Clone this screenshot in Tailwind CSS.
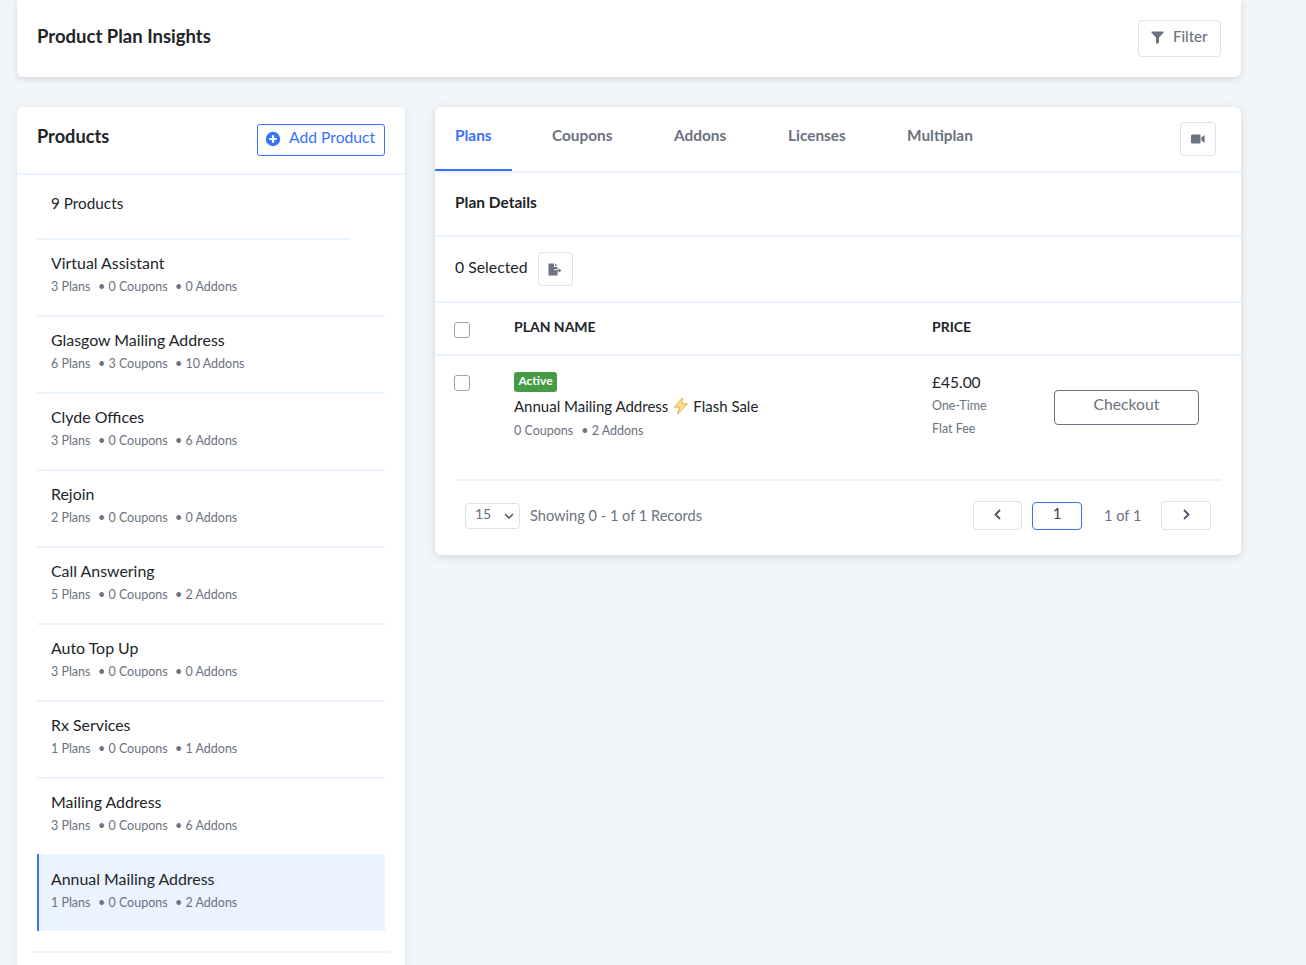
<!DOCTYPE html>
<html lang="en">
<head>
  <meta charset="UTF-8">
  <title>Product Plan Insights</title>
  <script src="https://cdn.jsdelivr.net/npm/@tailwindcss/browser@4"></script>
</head>
<body class="bg-[#f2f6f9] text-[#212529] font-['Lato',sans-serif] h-[965px] overflow-hidden">
  <div class="w-[1224px] ml-[17px]">

    <!-- Page header -->
    <div class="h-[77px] bg-white rounded-b-md shadow-[0_2px_6px_rgba(50,60,80,0.16)] flex justify-between pl-5 pr-5">
      <h1 class="text-[18.5px] font-bold leading-[24px] mt-[24px]">Product Plan Insights</h1>
      <button class="w-[83px] h-[37px] mt-5 border border-[#dfe1e8] rounded text-[#6b7280] text-[15px] font-medium flex items-center pl-3 gap-[9px]">
        <svg class="w-[13px] h-[13px] -mt-[2px]" viewBox="0 0 13 13"><path fill="#6b7280" d="M0.5 0.5h12v1.2L8 6.6V12L5 12.8V6.6L0.5 1.7z"/></svg>
        <span class="-mt-[4px]">Filter</span>
      </button>
    </div>

    <div class="grid grid-cols-[388px_806px] gap-[30px] mt-[30px]">

      <!-- Products list -->
      <div class="bg-white rounded-t-md shadow-[0_2px_8px_rgba(50,60,80,0.1)] h-[900px]">
        <div class="h-[68px] border-b-2 border-[#ebf4fd] flex justify-between pl-5 pr-5">
          <h2 class="text-[18.2px] font-bold leading-[24px] mt-[17px]">Products</h2>
          <button class="w-[128px] h-[32px] mt-[17px] border border-[#3772ff] rounded-[3px] text-[#3772ff] text-[15.7px] flex items-center pl-[7px] gap-[8px]">
            <svg class="w-[16px] h-[16px] -mt-[2px]" viewBox="0 0 16 16"><circle cx="8" cy="8" r="7.2" fill="#3772ff"/><path d="M8 4.2v7.6M4.2 8h7.6" stroke="#fff" stroke-width="2.2"/></svg>
            <span class="-mt-[4px]">Add Product</span>
          </button>
        </div>
        <div class="mx-5">
          <div class="h-[65px] w-[313px] border-b-2 border-[#ebf4fd] pl-[14px] pt-[18px] text-[15.3px] leading-5">9 Products</div>

          <div class="h-[77px] border-b-2 border-[#ebf4fd] pl-[14px] pt-[13px]">
            <div class="text-[15.9px] leading-5">Virtual Assistant</div>
            <div class="text-[12.5px] leading-5 mt-[4px] text-[#6b7280] flex"><span class="w-[47px]">3 Plans</span><span class="w-[77px]">• 0 Coupons</span><span>• 0 Addons</span></div>
          </div>
          <div class="h-[77px] border-b-2 border-[#ebf4fd] pl-[14px] pt-[13px]">
            <div class="text-[15.9px] leading-5">Glasgow Mailing Address</div>
            <div class="text-[12.5px] leading-5 mt-[4px] text-[#6b7280] flex"><span class="w-[47px]">6 Plans</span><span class="w-[77px]">• 3 Coupons</span><span>• 10 Addons</span></div>
          </div>
          <div class="h-[77px] border-b-2 border-[#ebf4fd] pl-[14px] pt-[13px]">
            <div class="text-[15.9px] leading-5">Clyde Offices</div>
            <div class="text-[12.5px] leading-5 mt-[4px] text-[#6b7280] flex"><span class="w-[47px]">3 Plans</span><span class="w-[77px]">• 0 Coupons</span><span>• 6 Addons</span></div>
          </div>
          <div class="h-[77px] border-b-2 border-[#ebf4fd] pl-[14px] pt-[13px]">
            <div class="text-[15.9px] leading-5">Rejoin</div>
            <div class="text-[12.5px] leading-5 mt-[4px] text-[#6b7280] flex"><span class="w-[47px]">2 Plans</span><span class="w-[77px]">• 0 Coupons</span><span>• 0 Addons</span></div>
          </div>
          <div class="h-[77px] border-b-2 border-[#ebf4fd] pl-[14px] pt-[13px]">
            <div class="text-[15.9px] leading-5">Call Answering</div>
            <div class="text-[12.5px] leading-5 mt-[4px] text-[#6b7280] flex"><span class="w-[47px]">5 Plans</span><span class="w-[77px]">• 0 Coupons</span><span>• 2 Addons</span></div>
          </div>
          <div class="h-[77px] border-b-2 border-[#ebf4fd] pl-[14px] pt-[13px]">
            <div class="text-[15.9px] leading-5">Auto Top Up</div>
            <div class="text-[12.5px] leading-5 mt-[4px] text-[#6b7280] flex"><span class="w-[47px]">3 Plans</span><span class="w-[77px]">• 0 Coupons</span><span>• 0 Addons</span></div>
          </div>
          <div class="h-[77px] border-b-2 border-[#ebf4fd] pl-[14px] pt-[13px]">
            <div class="text-[15.9px] leading-5">Rx Services</div>
            <div class="text-[12.5px] leading-5 mt-[4px] text-[#6b7280] flex"><span class="w-[47px]">1 Plans</span><span class="w-[77px]">• 0 Coupons</span><span>• 1 Addons</span></div>
          </div>
          <div class="h-[75px] pl-[14px] pt-[13px]">
            <div class="text-[15.9px] leading-5">Mailing Address</div>
            <div class="text-[12.5px] leading-5 mt-[4px] text-[#6b7280] flex"><span class="w-[47px]">3 Plans</span><span class="w-[77px]">• 0 Coupons</span><span>• 6 Addons</span></div>
          </div>
          <div class="h-[77px] bg-[#ebf3fe] border-l-2 border-[#3772ff] pl-[12px] pt-[15px]">
            <div class="text-[15.9px] leading-5">Annual Mailing Address</div>
            <div class="text-[12.5px] leading-5 mt-[4px] text-[#6b7280] flex"><span class="w-[47px]">1 Plans</span><span class="w-[77px]">• 0 Coupons</span><span>• 2 Addons</span></div>
          </div>
        </div>
        <div class="h-[2px] bg-[#ebf4fd] mx-[15px] mt-5"></div>
      </div>

      <!-- Plans panel -->
      <div class="bg-white rounded-md shadow-[0_2px_8px_rgba(50,60,80,0.16)] h-[448px]">
        <div class="h-[66px] border-b-2 border-[#ebf4fd] flex justify-between pr-[25px]">
          <div class="flex text-[15.4px] font-bold text-[#6b7280] leading-5">
            <div class="w-[77px] h-[64px] pl-5 pt-[18px] text-[#3772ff] border-b-2 border-[#3772ff]">Plans</div>
            <div class="ml-5 w-[102px] pl-5 pt-[18px]">Coupons</div>
            <div class="ml-5 w-[94px] pl-5 pt-[18px]">Addons</div>
            <div class="ml-5 w-[99px] pl-5 pt-[18px]">Licenses</div>
            <div class="ml-5 pl-5 pt-[18px]">Multiplan</div>
          </div>
          <button class="w-[36px] h-[34px] mt-[15px] border border-[#dfe1e8] rounded flex items-center justify-center">
            <svg class="w-[14px] h-[10px]" viewBox="0 0 14 10"><rect x="0" y="0.5" width="9.5" height="9" rx="1.2" fill="#6b7280"/><path fill="#6b7280" d="M10.3 3.6 13.6 1v8l-3.3-2.6z"/></svg>
          </button>
        </div>
        <div class="h-[64px] border-b-2 border-[#ebf4fd] pl-5 pt-[19px] text-[15.5px] font-bold leading-5">Plan Details</div>
        <div class="h-[66px] border-b-2 border-[#ebf4fd] pl-5 flex items-center gap-[10px]">
          <span class="text-[15.8px] -mt-[4px]">0 Selected</span>
          <button class="w-[35px] h-[34px] border border-[#dfe1e8] rounded flex items-center justify-center">
            <svg class="w-[14px] h-[13px]" viewBox="0 0 14 13"><path fill="#6b7280" d="M0.5 0.5h5.5v3.5h3.5v2.2H6.4v1.6h3.1V12.5H0.5zM7 .5l2.5 2.5H7zM7.3 6.9h3.2V5.3l3 2.2-3 2.2V8.1H7.3z"/></svg>
          </button>
        </div>

        <!-- Table head -->
        <div class="h-[53px] border-b-2 border-[#ebf4fd] flex text-[14px] font-bold leading-5">
          <span class="w-[16px] h-[16px] ml-[19px] mt-[19px] border border-[#9ca3af] rounded-[3px]"></span>
          <span class="w-[418px] ml-[44px] mt-[14px]">PLAN NAME</span>
          <span class="mt-[14px]">PRICE</span>
        </div>

        <!-- Table row -->
        <div class="h-[123px] flex">
          <span class="w-[16px] h-[16px] ml-[19px] mt-[19px] border border-[#9ca3af] rounded-[3px]"></span>
          <div class="w-[418px] ml-[44px] pt-[16px]">
            <span class="block w-[43px] h-[20px] bg-[#469b45] rounded-[3px] text-white text-[12px] font-bold leading-[18px] text-center">Active</span>
            <div class="flex items-center text-[15px] leading-5 mt-[4px]">
              <span>Annual Mailing Address</span>
              <svg class="w-[16px] h-[18px] ml-[5px] mr-[4px]" viewBox="0 0 16 18"><path fill="#fde68a" stroke="#eda53a" stroke-width="1" d="M9.5 0.8 1.5 10.2h5.2L4.6 17 14.5 6.8H8.8z"/></svg>
              <span>Flash Sale</span>
            </div>
            <div class="text-[12.5px] leading-5 mt-[5px] text-[#6b7280]"><span class="mr-2">0 Coupons</span>• 2 Addons</div>
          </div>
          <div class="w-[122px] pt-[16px]">
            <div class="text-[15.5px] leading-5">£45.00</div>
            <div class="text-[12.5px] leading-5 mt-[4px] text-[#6b7280]">One-Time</div>
            <div class="text-[12.5px] leading-5 mt-[3px] text-[#6b7280]">Flat Fee</div>
          </div>
          <button class="w-[145px] h-[35px] mt-[34px] border border-[#6b7280] rounded text-[15.7px] text-[#6b7280] pb-[6px]">Checkout</button>
        </div>

        <!-- Footer -->
        <div class="ml-[21px] mr-5 border-t-2 border-[#ebf4fd] pt-[20px] pl-[9px] pr-[10px] flex items-center">
          <div class="w-[55px] h-[26px] border border-[#dfe1e8] rounded flex items-center justify-between pl-[9px] pr-[5px] text-[14px] text-[#6b7280]">
            <span class="-mt-[4px]">15</span>
            <svg class="w-[10px] h-[6px]" viewBox="0 0 10 6"><path d="M1 1l4 4 4-4" fill="none" stroke="#4b5563" stroke-width="1.5"/></svg>
          </div>
          <span class="ml-[10px] text-[14.6px] text-[#6b7280]">Showing 0 - 1 of 1 Records</span>
          <button class="ml-auto w-[49px] h-[29px] border border-[#dfe1e8] rounded flex items-center justify-center">
            <svg class="w-[7px] h-[11px] -mt-[2px]" viewBox="0 0 7 11"><path d="M6 1 1.5 5.5 6 10" fill="none" stroke="#4b5563" stroke-width="1.8"/></svg>
          </button>
          <div class="ml-[10px] w-[50px] h-[28px] border border-[#3772ff] rounded text-center text-[15px] text-[#374151] leading-[20px]">1</div>
          <span class="ml-[22px] w-[57px] text-[14.6px] text-[#6b7280]">1 of 1</span>
          <button class="w-[50px] h-[29px] border border-[#dfe1e8] rounded flex items-center justify-center">
            <svg class="w-[7px] h-[11px] -mt-[2px]" viewBox="0 0 7 11"><path d="M1 1l4.5 4.5L1 10" fill="none" stroke="#4b5563" stroke-width="1.8"/></svg>
          </button>
        </div>
      </div>
    </div>
  </div>
</body>
</html>
